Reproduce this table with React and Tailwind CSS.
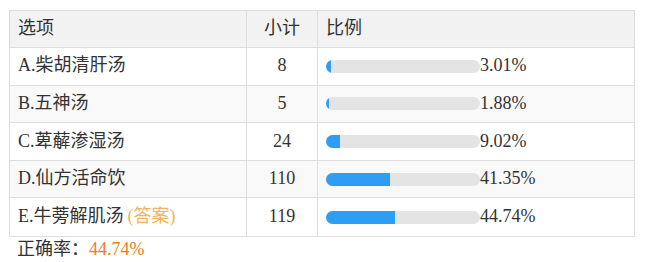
const rows = [
    { label: 'A.柴胡清肝汤', count: 8, pct: 3.01 },
    { label: 'B.五神汤', count: 5, pct: 1.88 },
    { label: 'C.萆薢渗湿汤', count: 24, pct: 9.02 },
    { label: 'D.仙方活命饮', count: 110, pct: 41.35 },
    { label: 'E.牛蒡解肌汤', count: 119, pct: 44.74, answer: true },
];

export default function App() {
    return (
        <div className="min-h-screen bg-white pt-[10px] pl-[9px] text-[18px] text-[#333] leading-[25.7px]"
            style={{ fontFamily: '"Liberation Serif", "Noto Sans CJK SC", serif' }}>
            <div className="w-[626px] border border-[#ddd]">
                <div className="flex h-[37px] bg-[#f2f2f2] border-b border-[#ddd]">
                    <div className="w-[237px] px-2 flex items-center border-r border-[#ddd]">选项</div>
                    <div className="w-[71px] flex items-center justify-center border-r border-[#ddd]">小计</div>
                    <div className="flex-1 px-2 flex items-center">比例</div>
                </div>
                {rows.map((row, i) => (
                    <div key={row.label}
                        className={`flex h-[37.6px] ${i < rows.length - 1 ? 'border-b border-[#ddd]' : ''} ${i % 2 === 1 ? 'bg-[#f9f9f9]' : 'bg-white'}`}>
                        <div className="w-[237px] px-2 flex items-center border-r border-[#ddd]">
                            {row.label}
                            {row.answer && <span className="ml-1 text-[#efb460]">(答案)</span>}
                        </div>
                        <div className="w-[71px] flex items-center justify-center border-r border-[#ddd]">{row.count}</div>
                        <div className="flex-1 pl-[8px] flex items-center">
                            <div className="w-[154px] h-[13px] rounded-full bg-[#e4e4e4] overflow-hidden">
                                <div className="h-full bg-[#2e9ef5]" style={{ width: `${row.pct}%` }} />
                            </div>
                            <span>{row.pct.toFixed(2)}%</span>
                        </div>
                    </div>
                ))}
            </div>
            <div className="pl-[8px]">
                正确率：<span className="text-[#f07b22]">44.74%</span>
            </div>
        </div>
    );
}
